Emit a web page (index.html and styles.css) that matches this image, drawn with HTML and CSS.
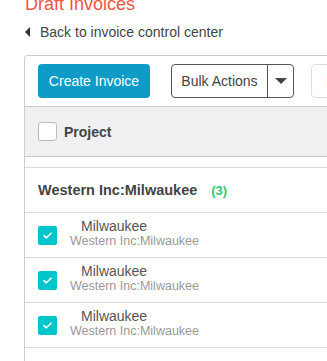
FILE: index.html
```html
<!DOCTYPE html>
<html>
<head>
    <title>Draft Invoices</title>
    <link rel="stylesheet" href="styles.css">
</head>
<body>
    <div class="page">
        <h1 class="title">Draft Invoices</h1>
        <a class="back-link" href="#"><span class="back-arrow"></span>Back to invoice control center</a>

        <div class="panel">
            <div class="toolbar">
                <button class="btn btn-primary">Create Invoice</button>
                <div class="split-btn">
                    <button class="split-main">Bulk Actions</button>
                    <button class="split-caret"><span class="caret"></span></button>
                </div>
                <button class="btn btn-light">Send</button>
            </div>

            <div class="table-head">
                <span class="checkbox"></span>
                <span class="head-label">Project</span>
            </div>

            <div class="group-row">
                <span class="group-name">Western Inc:Milwaukee</span>
                <span class="group-count">(3)</span>
            </div>

            <div class="item-row">
                <span class="checkbox checked">
                    <svg width="11" height="9" viewBox="0 0 11 9"><path d="M2 4.6 L4.4 6.8 L9 2.2" fill="none" stroke="#fff" stroke-width="1.6" stroke-linecap="round" stroke-linejoin="round"/></svg>
                </span>
                <div class="item-text">
                    <div class="item-name">Milwaukee</div>
                    <div class="item-sub">Western Inc:Milwaukee</div>
                </div>
            </div>
            <div class="item-row">
                <span class="checkbox checked">
                    <svg width="11" height="9" viewBox="0 0 11 9"><path d="M2 4.6 L4.4 6.8 L9 2.2" fill="none" stroke="#fff" stroke-width="1.6" stroke-linecap="round" stroke-linejoin="round"/></svg>
                </span>
                <div class="item-text">
                    <div class="item-name">Milwaukee</div>
                    <div class="item-sub">Western Inc:Milwaukee</div>
                </div>
            </div>
            <div class="item-row">
                <span class="checkbox checked">
                    <svg width="11" height="9" viewBox="0 0 11 9"><path d="M2 4.6 L4.4 6.8 L9 2.2" fill="none" stroke="#fff" stroke-width="1.6" stroke-linecap="round" stroke-linejoin="round"/></svg>
                </span>
                <div class="item-text">
                    <div class="item-name">Milwaukee</div>
                    <div class="item-sub">Western Inc:Milwaukee</div>
                </div>
            </div>
            <div class="item-row empty"></div>
        </div>
    </div>
</body>
</html>
```

FILE: styles.css
```css
html, body {
    margin: 0;
    padding: 0;
    overflow: hidden;
}
body {
    font-family: "Liberation Sans", Arial, sans-serif;
    color: #444;
    background: #fff;
}
.page {
    padding-left: 24px;
    width: 420px;
}
.title {
    margin: -6px 0 0 1px;
    font-size: 18px;
    line-height: 20px;
    font-weight: normal;
    color: #f0553f;
}
.back-link {
    display: flex;
    align-items: center;
    margin-top: 10px;
    height: 16px;
    font-size: 14px;
    line-height: 16px;
    color: #444;
    text-decoration: none;
}
.back-arrow {
    width: 0;
    height: 0;
    margin: 0 10px 0 1px;
    border-top: 5px solid transparent;
    border-bottom: 5px solid transparent;
    border-right: 5px solid #333;
}
.panel {
    margin-top: 15px;
    border: 1px solid #ccc;
    border-right: none;
    border-radius: 4px 0 0 0;
    height: 400px;
}
.toolbar {
    display: flex;
    align-items: center;
    gap: 21px;
    padding: 8px 0 8px 13px;
    height: 34px;
}
.btn {
    height: 34px;
    padding: 0 14px;
    font-family: inherit;
    font-size: 14px;
    border-radius: 4px;
    white-space: nowrap;
    cursor: pointer;
}
.btn-primary {
    width: 112px;
    padding: 0;
    border: none;
    background: #0e9bc8;
    color: #fff;
}
.btn-light {
    margin-left: -4px;
    border: 1px solid #ddd;
    background: #fff;
    color: #f39c12;
}
.split-btn {
    display: flex;
    height: 34px;
    border: 1px solid #555;
    border-radius: 4px;
    box-sizing: border-box;
}
.split-main {
    width: 96px;
    padding: 0;
    border: none;
    border-right: 1px solid #555;
    background: transparent;
    font-family: inherit;
    font-size: 14px;
    color: #444;
    white-space: nowrap;
}
.split-caret {
    width: 25px;
    padding: 0;
    border: none;
    background: transparent;
    display: flex;
    align-items: center;
    justify-content: center;
}
.caret {
    width: 0;
    height: 0;
    border-left: 6px solid transparent;
    border-right: 6px solid transparent;
    border-top: 6px solid #444;
}
.table-head {
    display: flex;
    align-items: center;
    height: 49px;
    padding-left: 13px;
    background: #f0f0f2;
    border-top: 1px solid #ccc;
    border-bottom: 1px solid #ccc;
}
.head-label {
    margin-left: 7px;
    font-size: 14px;
    font-weight: bold;
    color: #444;
}
.checkbox {
    width: 19px;
    height: 19px;
    box-sizing: border-box;
    border: 1px solid #bbb;
    border-radius: 3px;
    background: #fff;
    flex-shrink: 0;
    display: flex;
    align-items: center;
    justify-content: center;
}
.checkbox.checked {
    border: none;
    border-radius: 2px;
    background: #00c6cc;
}
.group-row {
    display: flex;
    align-items: center;
    height: 44px;
    margin-top: 10px;
    padding-left: 13px;
    border-top: 1px solid #dcdce6;
    border-bottom: 1px solid #dcdce6;
}
.group-name {
    font-size: 14.5px;
    font-weight: bold;
    color: #444;
}
.group-count {
    margin-left: 14px;
    font-size: 13px;
    font-weight: bold;
    color: #2ecc71;
}
.item-row {
    display: flex;
    align-items: center;
    height: 44px;
    padding-left: 13px;
    border-bottom: 1px solid #dcdce6;
}
.item-row.empty {
    border-bottom: none;
}
.item-text {
    margin-left: 13px;
    margin-top: -4px;
}
.item-name {
    padding-left: 11px;
    font-size: 14px;
    line-height: 15px;
    color: #555;
}
.item-sub {
    font-size: 12.5px;
    line-height: 14px;
    color: #999;
}
```
